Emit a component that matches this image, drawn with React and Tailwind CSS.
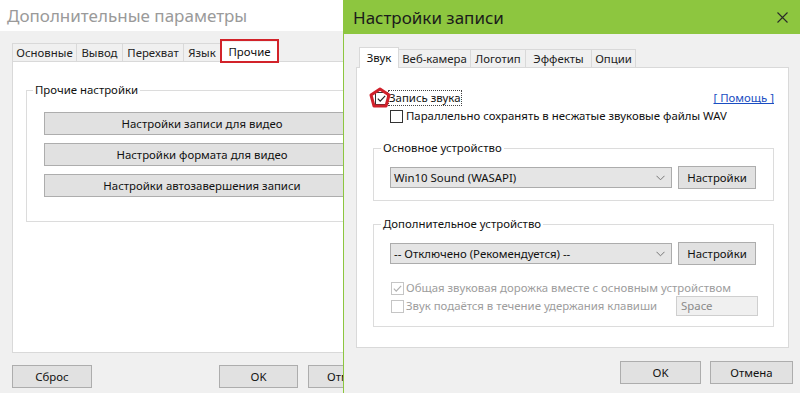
import React from 'react';

const font = { fontFamily: '"Noto Sans", "Open Sans", Arial, sans-serif' };

const Check = ({ checked, disabled }) => (
    <span className={`w-[13px] h-[13px] flex items-center justify-center border bg-white shrink-0 ${disabled ? 'border-[#c5c5c5]' : 'border-[#333]'}`}>
        {checked && (
            <svg className="w-[11px] h-[11px]" viewBox="0 0 12 12" fill="none">
                <path d="M2 6.2l2.6 2.6L10 3.2" stroke={disabled ? '#b0b0b0' : '#222'} strokeWidth="1.3" />
            </svg>
        )}
    </span>
);

const Combo = ({ value }) => (
    <div className="w-[282px] h-[21px] flex items-center justify-between bg-[#e5e5e5] border border-[#acacac] pl-[3px] pr-[6px] text-[11.4px] text-[#111]">
        <span>{value}</span>
        <svg className="w-[9px] h-[6px]" viewBox="0 0 9 6" fill="none">
            <path d="M0.5 0.8l4 4 4-4" stroke="#777" strokeWidth="1" />
        </svg>
    </div>
);

const Btn = ({ children, className = '' }) => (
    <button className={`h-[23px] flex items-center justify-center bg-[#e1e1e1] border border-[#adadad] text-[11.4px] text-[#111] ${className}`}>
        {children}
    </button>
);

const LeftWindow = () => {
    const tabs = [
        { label: 'Основные', w: 'w-[65px] border-l' },
        { label: 'Вывод', w: 'w-[46px]' },
        { label: 'Перехват', w: 'w-[61px]' },
        { label: 'Язык', w: 'w-[37px]' },
    ];
    return (
        <div className="w-[400px] h-[393px] flex flex-col bg-[#f0f0f0]">
            <div className="h-[31px] bg-white pl-[7px] flex items-center text-[17px] text-[#9a9a9a] leading-none">
                Дополнительные параметры
            </div>
            <div className="flex items-end h-[30px] pl-[12px]">
                {tabs.map(t => (
                    <div key={t.label} className={`${t.w} h-[18px] border-t border-r border-[#d9d9d9] bg-[#f0f0f0] flex items-center justify-center text-[11.4px] text-[#222]`}>
                        {t.label}
                    </div>
                ))}
                <div className="relative w-[57px] h-[20px] bg-white flex items-center justify-center text-[11.4px] text-[#111] z-10 -mb-px">
                    Прочие
                    <div className="absolute -inset-x-[1px] -top-[3px] -bottom-[1px] border-2 border-[#d2232a]" />
                </div>
            </div>
            <div className="ml-[12px] w-[380px] h-[292px] bg-white border border-[#d9d9d9] pl-[13px] pt-[20px]">
                <fieldset className="w-[360px] h-[140px] border border-[#dcdcdc] pl-[17px] pr-0">
                    <legend className="-ml-[11px] px-[2px] text-[11.4px] leading-[16px] text-[#111]">Прочие настройки</legend>
                    <div className="flex flex-col gap-[8px] pt-[14px]">
                        <Btn className="w-[316px] border-[#0078d7]">Настройки записи для видео</Btn>
                        <Btn className="w-[316px]">Настройки формата для видео</Btn>
                        <Btn className="w-[316px]">Настройки автозавершения записи</Btn>
                    </div>
                </fieldset>
            </div>
            <div className="flex items-center px-[12px] mt-[12px]">
                <Btn className="w-[81px]">Сброс</Btn>
                <Btn className="w-[81px] ml-[127px]">OK</Btn>
                <Btn className="w-[81px] ml-[10px]">Отмена</Btn>
            </div>
        </div>
    );
};

const Dialog = () => {
    const tabs = [
        { label: 'Веб-камера', w: 'w-[72px]' },
        { label: 'Логотип', w: 'w-[55px]' },
        { label: 'Эффекты', w: 'w-[66px]' },
        { label: 'Опции', w: 'w-[44px]' },
    ];
    return (
        <div className="absolute left-[343px] top-0 w-[457px] h-[393px] flex flex-col bg-[#f0f0f0] border-l border-[#8dc63f]">
            <div className="h-[34px] bg-[#8dc63f] flex items-center justify-between pl-[9px] pr-[12px]">
                <span className="text-[17px] text-[#1b1b1b] leading-none">Настройки записи</span>
                <svg className="w-[11px] h-[11px]" viewBox="0 0 11 11" fill="none">
                    <path d="M0.5 0.5l10 10M10.5 0.5l-10 10" stroke="#2a2a2a" strokeWidth="1.1" />
                </svg>
            </div>
            <div className="flex items-end h-[33px] pl-[15px]">
                <div className="w-[40px] h-[21px] bg-white border border-b-0 border-[#d9d9d9] flex items-center justify-center text-[11.4px] text-[#111] z-10 -mb-px">
                    Звук
                </div>
                {tabs.map(t => (
                    <div key={t.label} className={`${t.w} h-[18px] border border-b-0 border-l-0 border-[#d9d9d9] bg-[#f0f0f0] flex items-center justify-center text-[11.4px] text-[#222]`}>
                        {t.label}
                    </div>
                ))}
            </div>
            <div className="ml-[12px] w-[433px] h-[281px] bg-white border border-[#d9d9d9] flex flex-col">
                <div className="relative flex items-center justify-between h-[16px] mt-[22px] pl-[18px] pr-[14px]">
                    <div className="flex items-center">
                        <Check checked />
                        <span className="ml-px text-[11.4px] text-[#111] leading-[14px] outline-1 outline-dotted outline-[#444]">Запись звука</span>
                    </div>
                    <span className="text-[11.4px] text-[#1a4ec2] underline">[ Помощь ]</span>
                    <svg className="absolute left-[12px] top-[-3px] w-[22px] h-[21px]" viewBox="0 0 22 21" fill="none">
                        <polygon points="11,2 20,8 17,19 5,19 2,8" stroke="#d0212b" strokeWidth="3" strokeLinejoin="round" />
                    </svg>
                </div>
                <div className="flex items-center h-[16px] mt-[2px] pl-[33px]">
                    <Check />
                    <span className="ml-[3px] text-[11.4px] text-[#111]">Параллельно сохранять в несжатые звуковые файлы WAV</span>
                </div>
                <fieldset className="ml-[16px] mt-[16px] w-[401px] border border-[#dcdcdc] pl-[16px] pt-[10px] pb-[11px]">
                    <legend className="-ml-[9px] px-[2px] text-[11.4px] leading-[16px] text-[#111]">Основное устройство</legend>
                    <div className="flex items-center gap-[6px]">
                        <Combo value="Win10 Sound (WASAPI)" />
                        <Btn className="w-[78px]">Настройки</Btn>
                    </div>
                </fieldset>
                <fieldset className="ml-[16px] mt-[15px] w-[401px] border border-[#dcdcdc] pl-[16px] pt-[10px] pb-[10px]">
                    <legend className="-ml-[9px] px-[2px] text-[11.4px] leading-[16px] text-[#111]">Дополнительное устройство</legend>
                    <div className="flex items-center gap-[6px]">
                        <Combo value="-- Отключено (Рекомендуется) --" />
                        <Btn className="w-[78px]">Настройки</Btn>
                    </div>
                    <div className="flex items-center h-[16px] mt-[15px] pl-px">
                        <Check checked disabled />
                        <span className="ml-[2px] text-[11.4px] text-[#9d9d9d]">Общая звуковая дорожка вместе с основным устройством</span>
                    </div>
                    <div className="flex items-center h-[20px] pl-px">
                        <Check disabled />
                        <span className="ml-[2px] w-[270px] text-[11.4px] text-[#9d9d9d]">Звук подаётся в течение удержания клавиши</span>
                        <div className="w-[82px] h-[20px] bg-[#f0f0f0] border border-[#cfcfcf] flex items-center pl-[4px] text-[11.4px] text-[#8a8a8a]">Space</div>
                    </div>
                </fieldset>
            </div>
            <div className="flex items-center justify-end gap-[9px] pr-[7px] mt-[13px]">
                <Btn className="w-[81px] h-[22px] border-[#0078d7]">OK</Btn>
                <Btn className="w-[83px] h-[22px]">Отмена</Btn>
            </div>
        </div>
    );
};

export default function App() {
    return (
        <div className="relative w-[800px] h-[393px] overflow-hidden bg-[#f0f0f0]" style={font}>
            <LeftWindow />
            <Dialog />
        </div>
    );
}
